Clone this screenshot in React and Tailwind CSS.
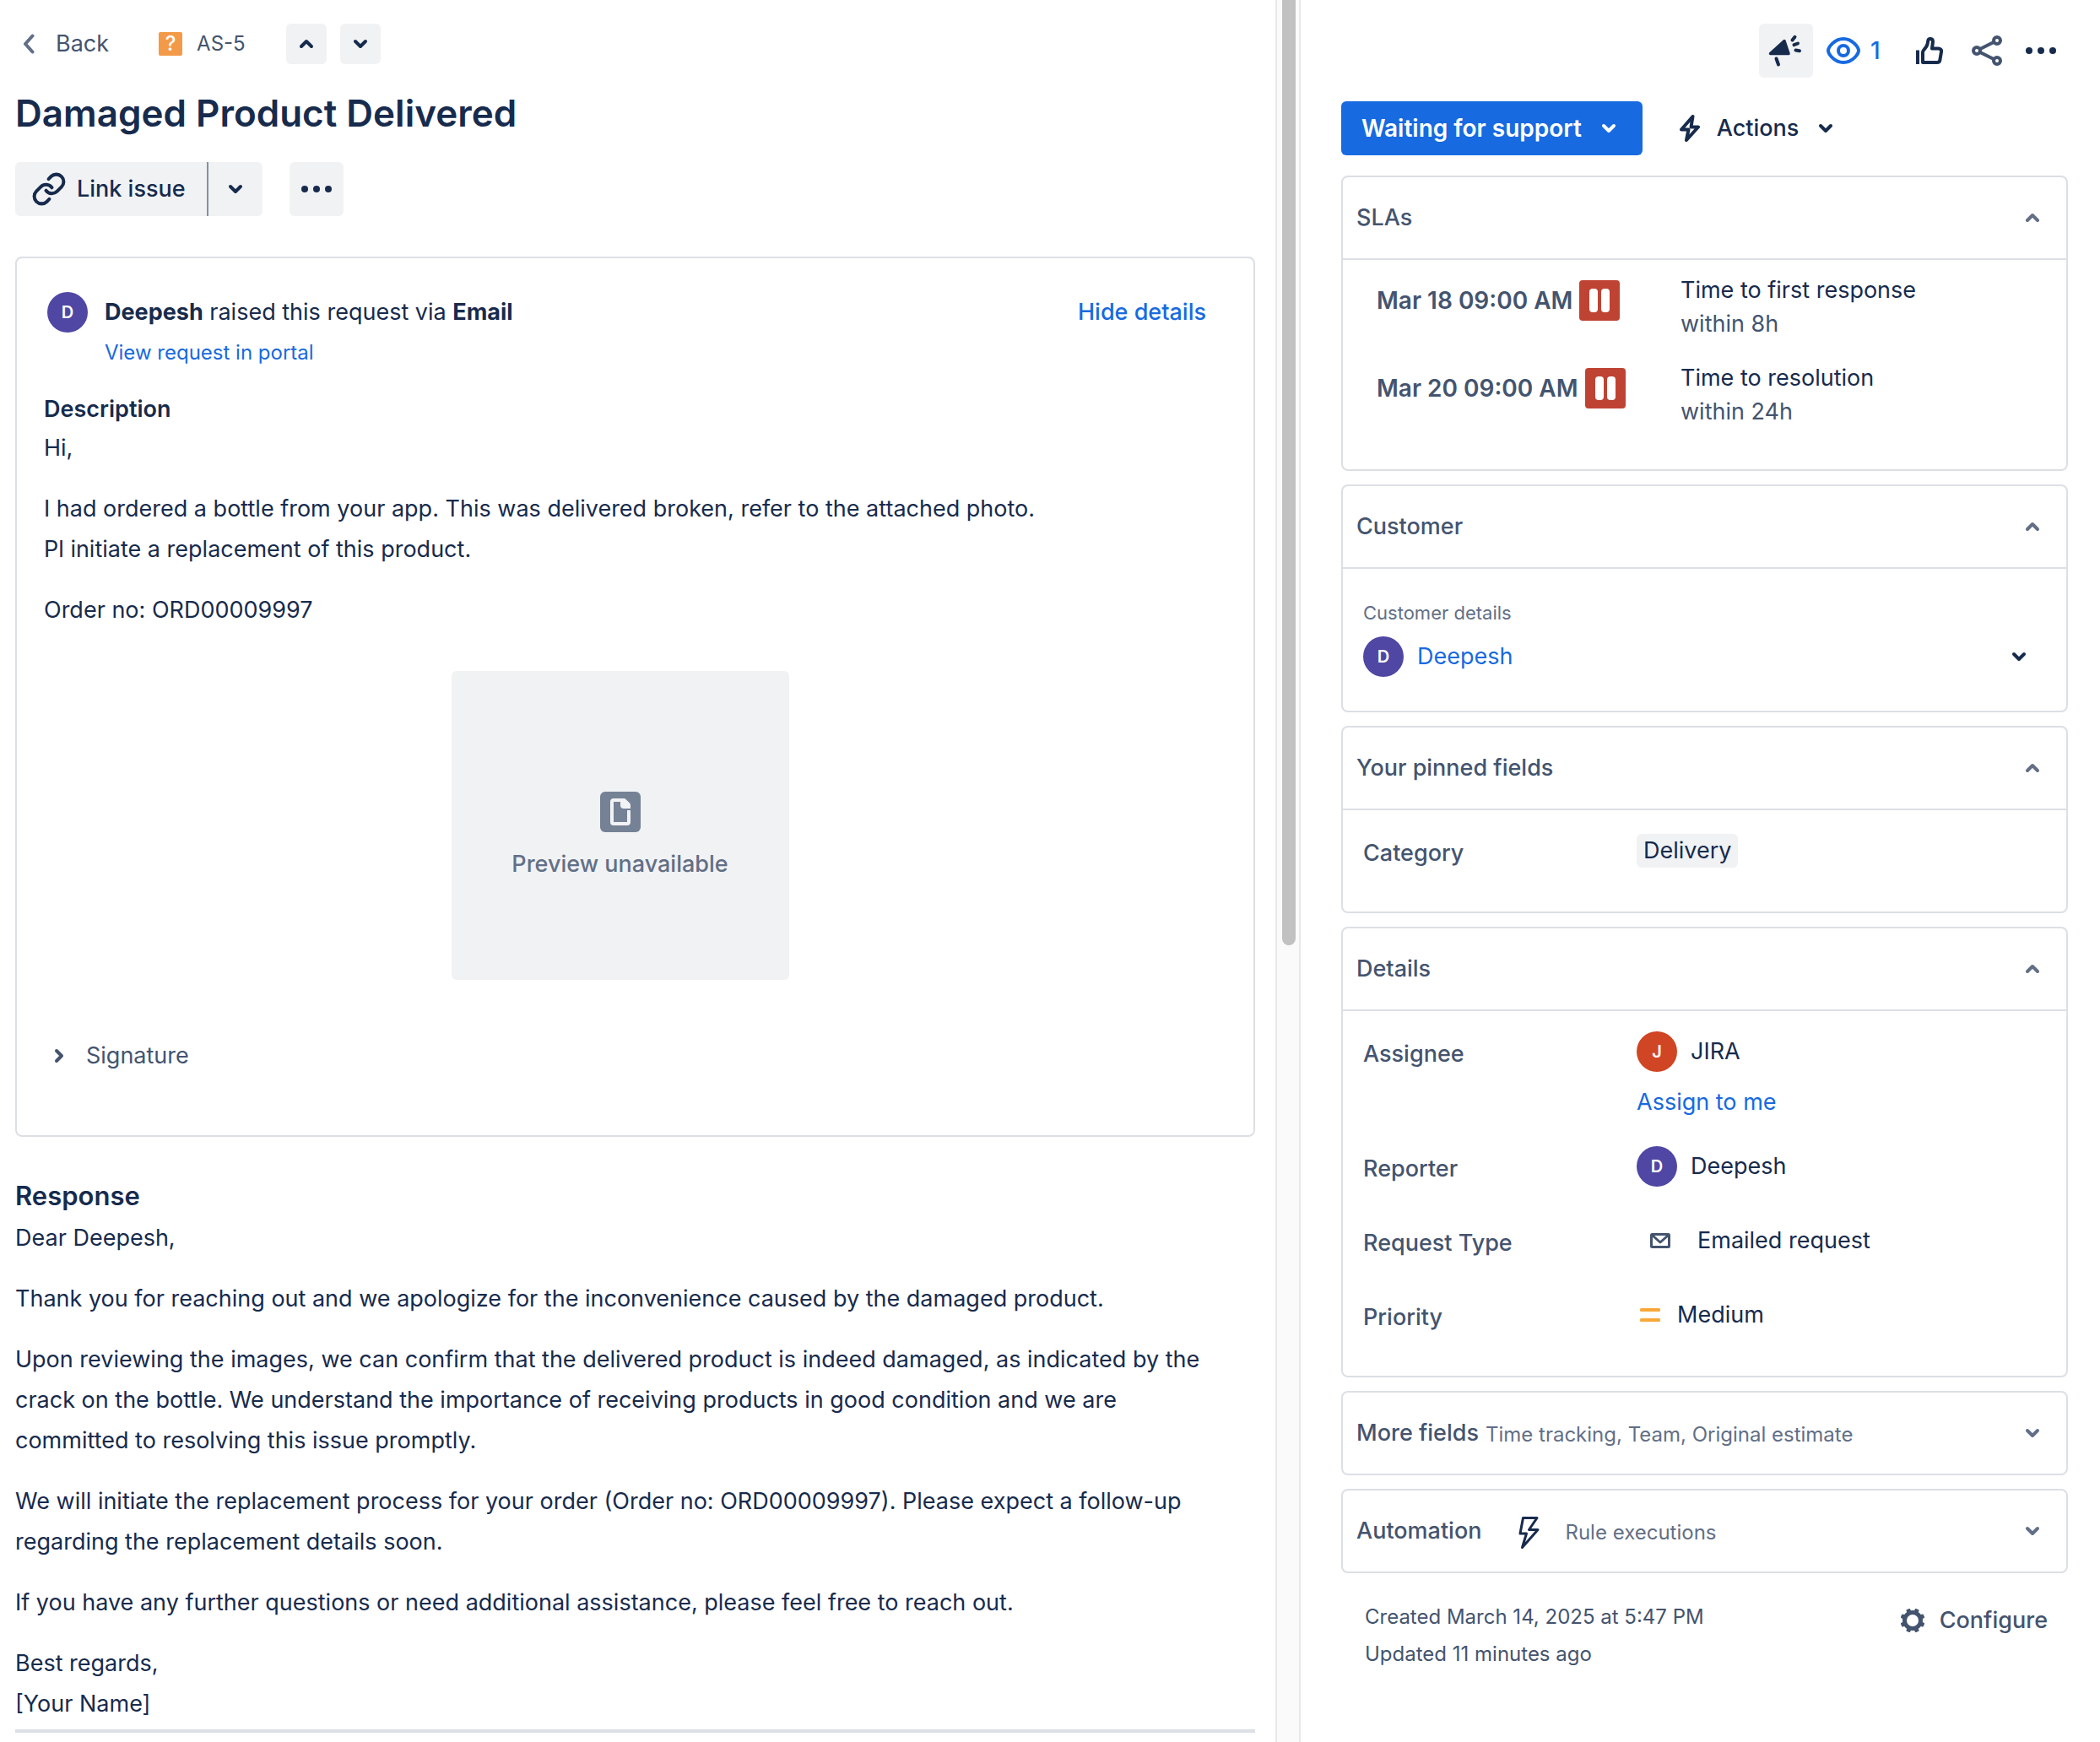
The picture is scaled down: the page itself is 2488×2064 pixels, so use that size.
import React from "react";
import { Link as LinkIcon } from "lucide-react";

const CHEVRONS = {
  down: "M6 9l6 6 6-6",
  up: "M6 15l6-6 6 6",
  right: "M9 6l6 6-6 6",
};

function Chevron({ dir = "down", className = "" }) {
  return (
    <svg viewBox="0 0 24 24" className={`size-6 shrink-0 ${className}`} fill="none" stroke="currentColor" strokeWidth="4" strokeLinecap="round" strokeLinejoin="round" aria-hidden="true">
      <path d={CHEVRONS[dir]} />
    </svg>
  );
}

function BackIcon() {
  return (
    <svg viewBox="0 0 16 24" className="h-6 w-4 text-[#626F86]" fill="none" stroke="currentColor" strokeWidth="4" strokeLinecap="round" strokeLinejoin="round" aria-hidden="true">
      <path d="M12.5 2.5 4 12l8.5 9.5" />
    </svg>
  );
}

function Dots() {
  return (
    <svg viewBox="0 0 36 8" className="h-2 w-9" fill="currentColor" aria-hidden="true">
      <circle cx="4" cy="4" r="4" />
      <circle cx="18" cy="4" r="4" />
      <circle cx="32" cy="4" r="4" />
    </svg>
  );
}

function Megaphone() {
  return (
    <svg viewBox="0 0 64 64" className="size-16" fill="none" stroke="currentColor" strokeWidth="4" strokeLinecap="round" strokeLinejoin="round" aria-hidden="true">
      <path d="M13.5 35.5 30 20.5l5 15Z" fill="currentColor" strokeWidth="3.5" />
      <path d="M20.500 41.500 23 48.500M39.500 19.500l3-3.700M41.500 25.200l4.500-1.700M43.500 31.500l4.500.7" />
    </svg>
  );
}

function Eye() {
  return (
    <svg viewBox="0 0 48 48" className="size-12" fill="none" stroke="currentColor" strokeWidth="4" aria-hidden="true">
      <path d="M6 24c0-3.500 7-14 18-14s18 10.500 18 14-7 14-18 14S6 27.500 6 24Z" />
      <circle cx="24" cy="24" r="6" />
    </svg>
  );
}

function ThumbUp() {
  return (
    <svg viewBox="0 0 32 34" className="h-[34px] w-8" fill="none" stroke="currentColor" strokeWidth="4" strokeLinejoin="round" aria-hidden="true">
      <path d="M2 16.500V33" />
      <path d="M8 31V18.500c0-2.500 4.500-4.500 5.500-9l.7-4C14.800 2 20 2 20 6.500L19 14.500h7.500c2.500 0 4 1.500 3.500 3.800l-1.700 10c-.3 1.700-1.500 2.700-3.300 2.700Z" />
    </svg>
  );
}

function Share() {
  return (
    <svg viewBox="0 0 48 48" className="size-12 text-[#44546F]" fill="none" stroke="currentColor" strokeWidth="4" aria-hidden="true">
      <circle cx="12" cy="24" r="4" />
      <circle cx="36" cy="12" r="4" />
      <circle cx="36" cy="36" r="4" />
      <path d="m15.500 22.200 17-8.500M15.500 25.800l17 8.500" />
    </svg>
  );
}

function ActionBolt() {
  return (
    <svg viewBox="0 0 24 32" className="h-8 w-6" fill="none" stroke="currentColor" strokeWidth="4" strokeLinecap="round" strokeLinejoin="round" aria-hidden="true">
      <path d="M15.500 2 2 17.500h8.500L8 30l14-15.500h-8.500Z" />
    </svg>
  );
}

function RuleBolt() {
  return (
    <svg viewBox="0 0 25 40" className="h-10 w-[25px] text-[#172B4D]" fill="none" stroke="currentColor" strokeWidth="3" strokeLinejoin="round" aria-hidden="true">
      <path d="M5.500 2.500H22L12.500 16.500H23L4.500 37.500 9.500 21H2Z" />
    </svg>
  );
}

function Gear() {
  return (
    <svg viewBox="0 0 28 28" className="size-7" fill="currentColor" aria-hidden="true">
      <circle cx="14" cy="14" r="9.500" fill="none" stroke="currentColor" strokeWidth="5" />
      {[22.5, 67.5, 112.5, 157.5, 202.5, 247.5, 292.5, 337.5].map((a) => (
        <rect key={a} x="11.500" y="-0.500" width="5" height="5" rx="1" transform={`rotate(${a} 14 14)`} />
      ))}
    </svg>
  );
}

function Mail() {
  return (
    <svg viewBox="0 0 24 18" className="h-[18px] w-6 text-[#44546F]" fill="none" stroke="currentColor" strokeWidth="3" strokeLinejoin="round" aria-hidden="true">
      <rect x="1.500" y="1.500" width="21" height="15" rx="1" />
      <path d="m3 3 9 8 9-8" />
    </svg>
  );
}

function MediumPriority() {
  return (
    <svg viewBox="0 0 24 16" className="h-4 w-6" fill="#F9A737" aria-hidden="true">
      <rect width="24" height="4" rx="1.500" />
      <rect y="12" width="24" height="4" rx="1.500" />
    </svg>
  );
}

function FileIcon() {
  return (
    <svg viewBox="0 0 48 48" className="size-12" aria-hidden="true">
      <rect width="48" height="48" rx="6" fill="#758195" />
      <path d="M34 22v14a2 2 0 0 1-2 2H16a2 2 0 0 1-2-2V12a2 2 0 0 1 2-2h11" fill="none" stroke="#F1F2F4" strokeWidth="4" />
      <path d="M24 8h4c1 0 2 .5 2.700 1.200L35 13.500c.6.700 1 1.500 1 2.500v4h-8a4 4 0 0 1-4-4Z" fill="#F1F2F4" />
    </svg>
  );
}

function Avatar({ letter, className = "bg-[#4F47A3]" }) {
  return (
    <span className={`flex size-12 shrink-0 items-center justify-center rounded-full text-xl font-semibold text-white ${className}`}>
      {letter}
    </span>
  );
}

function PausedBadge() {
  return (
    <span role="img" aria-label="Paused" className="flex size-12 items-center justify-center gap-1 rounded bg-[#BF4333]">
      <span className="h-7 w-2.5 rounded-sm bg-white" />
      <span className="h-7 w-2.5 rounded-sm bg-white" />
    </span>
  );
}

function Panel({ title, extra, open = true, children }) {
  return (
    <section className="rounded-lg border-2 border-[#DCDFE4]">
      <h2>
        <button type="button" aria-expanded={open} className="flex h-24 w-full items-center pr-7 pl-4 text-left text-[#44546F]">
          <span className="font-medium">{title}</span>
          {extra}
          <Chevron dir={open ? "up" : "down"} className="ml-auto text-[#626F86]" />
        </button>
      </h2>
      {open && <div className="border-t-2 border-[#DCDFE4]">{children}</div>}
    </section>
  );
}

function Field({ label, children }) {
  return (
    <div className="grid grid-cols-[324fr_509fr]">
      <dt className="leading-[54px] font-medium text-[#44546F]">{label}</dt>
      <dd>{children}</dd>
    </div>
  );
}

function Sla({ due, name, limit }) {
  return (
    <li className="grid grid-cols-[360fr_457fr]">
      <div className="mt-2 flex h-12 items-center gap-2 text-[28px] font-semibold text-[#44546F]">
        {due}
        <PausedBadge />
      </div>
      <div className="leading-10">
        <p>{name}</p>
        <p className="text-[#44546F]">{limit}</p>
      </div>
    </li>
  );
}

export default function App() {
  return (
    <div className="grid min-h-screen grid-cols-[minmax(0,1511fr)_30px_minmax(0,947fr)] bg-white font-[Inter,sans-serif] text-[27px] text-[#172B4D]">
      <main className="pt-7 pr-6 pl-[18px]">
        <nav className="flex h-12 items-center text-[#44546F]">
          <a href="#queue" className="ml-2 flex items-center gap-6">
            <BackIcon />
            Back
          </a>
          <a href="#issue" className="ml-[59px] flex items-center gap-[17px] text-2xl">
            <span aria-hidden="true" className="flex size-7 items-center justify-center rounded-xs bg-[#F39A49] text-2xl leading-7 font-medium text-white">?</span>
            AS-5
          </a>
          <div className="ml-12 flex gap-4 text-[#172B4D]">
            <button type="button" aria-label="Previous issue" className="flex size-12 items-center justify-center rounded-md bg-[#F1F2F4]">
              <Chevron dir="up" />
            </button>
            <button type="button" aria-label="Next issue" className="flex size-12 items-center justify-center rounded-md bg-[#F1F2F4]">
              <Chevron />
            </button>
          </div>
        </nav>

        <h1 className="mt-[30px] text-[44px] leading-[56px] font-semibold">Damaged Product Delivered</h1>

        <div className="mt-[30px] flex h-16 gap-8">
          <div className="flex overflow-hidden rounded-md bg-[#F1F2F4]">
            <button type="button" className="flex items-center gap-3 border-r-2 border-[#8590A2] pr-[25px] pl-[19px] font-medium">
              <LinkIcon className="size-[42px]" strokeWidth={2.3} aria-hidden="true" />
              Link issue
            </button>
            <button type="button" aria-label="More link options" className="flex w-16 items-center justify-center">
              <Chevron />
            </button>
          </div>
          <button type="button" aria-label="More actions" className="flex w-16 items-center justify-center rounded-md bg-[#F1F2F4]">
            <Dots />
          </button>
        </div>

        <section className="mt-12 rounded-lg border-2 border-[#DCDFE4] pt-10 pr-14 pb-[70px] pl-8 leading-12">
          <header className="flex pl-1">
            <Avatar letter="D" />
            <div className="ml-5">
              <p>
                <strong className="font-bold">Deepesh</strong> raised this request via <strong className="font-bold">Email</strong>
              </p>
              <a href="#portal" className="block text-2xl leading-12 text-[#176AE0]">View request in portal</a>
            </div>
            <button type="button" className="ml-auto self-start font-medium text-[#176AE0]">Hide details</button>
          </header>
          <h2 className="mt-[21px] leading-11 font-semibold">Description</h2>
          <p>Hi,</p>
          <p className="mt-6">
            I had ordered a bottle from your app. This was delivered broken, refer to the attached photo.
            <br />
            Pl initiate a replacement of this product.
          </p>
          <p className="mt-6">Order no: ORD00009997</p>
          <div className="mt-12 mr-1 flex justify-center pr-2">
            <div className="flex h-[366px] w-[400px] flex-col items-center rounded-md bg-[#F1F2F4] pt-[143px]">
              <FileIcon />
              <p className="mt-3.5 font-medium text-[#626F86]">Preview unavailable</p>
            </div>
          </div>
          <button type="button" aria-expanded="false" className="mt-[66px] flex items-center gap-5 pl-1.5 text-[#44546F]">
            <Chevron dir="right" />
            Signature
          </button>
        </section>

        <section className="pr-10 leading-12">
          <h2 className="mt-11 text-[31px] leading-[52px] font-semibold">Response</h2>
          <div className="flex flex-col gap-6">
            <p>Dear Deepesh,</p>
            <p>Thank you for reaching out and we apologize for the inconvenience caused by the damaged product.</p>
            <p>Upon reviewing the images, we can confirm that the delivered product is indeed damaged, as indicated by the crack on the bottle. We understand the importance of receiving products in good condition and we are committed to resolving this issue promptly.</p>
            <p>We will initiate the replacement process for your order (Order no: ORD00009997). Please expect a follow-up regarding the replacement details soon.</p>
            <p>If you have any further questions or need additional assistance, please feel free to reach out.</p>
            <p>
              Best regards,
              <br />
              [Your Name]
            </p>
          </div>
        </section>
        <hr className="mt-1.5 h-1 border-0 bg-[#DCDFE4]" />
      </main>

      <div aria-hidden="true" className="border-x-2 border-[#E8E8E8] bg-[#FAFAFA] pl-1.5">
        <div className="h-280 w-4 rounded-b-full bg-[#C1C1C1]" />
      </div>

      <aside className="pt-7 pr-[38px] pl-12">
        <div className="flex h-16 items-center justify-end">
          <button type="button" aria-label="Give feedback" className="rounded-md bg-[#F1F2F4]">
            <Megaphone />
          </button>
          <button type="button" aria-label="Watching, 1 watcher" className="ml-1 flex h-16 w-[98px] items-center gap-2 pl-2 text-[28px] font-medium text-[#176AE0]">
            <Eye />1
          </button>
          <button type="button" aria-label="Vote" className="ml-1 flex size-16 items-center justify-center">
            <ThumbUp />
          </button>
          <button type="button" aria-label="Share" className="ml-1 flex size-16 items-center justify-center">
            <Share />
          </button>
          <button type="button" aria-label="More" className="flex size-16 items-center justify-center">
            <Dots />
          </button>
        </div>

        <div className="mt-7 flex h-16">
          <button type="button" className="flex items-center gap-5 rounded-md bg-[#176AE0] pr-7 pl-6 text-[28px] font-semibold text-white">
            Waiting for support
            <Chevron />
          </button>
          <button type="button" className="ml-11 flex items-center gap-5 font-medium">
            <ActionBolt />
            Actions
            <Chevron />
          </button>
        </div>

        <div className="mt-6 flex flex-col gap-4">
          <Panel title="SLAs">
            <ul className="flex flex-col gap-6 pt-4 pb-12 pl-10">
              <Sla due="Mar 18 09:00 AM" name="Time to first response" limit="within 8h" />
              <Sla due="Mar 20 09:00 AM" name="Time to resolution" limit="within 24h" />
            </ul>
          </Panel>

          <Panel title="Customer">
            <div className="pt-9 pr-11 pb-10 pl-6">
              <p className="text-[22px] leading-8 text-[#626F86]">Customer details</p>
              <div className="mt-3 flex items-center">
                <Avatar letter="D" />
                <a href="#customer" className="ml-4 text-[#176AE0]">Deepesh</a>
                <button type="button" aria-label="Show customer details" className="ml-auto">
                  <Chevron />
                </button>
              </div>
            </div>
          </Panel>

          <Panel title="Your pinned fields">
            <dl className="pt-6 pb-[42px] pl-6">
              <Field label="Category">
                <span className="mt-1 inline-block rounded-md bg-[#F1F2F4] px-2 leading-10">Delivery</span>
              </Field>
            </dl>
          </Panel>

          <Panel title="Details">
            <dl className="flex flex-col gap-[34px] pt-6 pb-[42px] pl-6">
              <Field label="Assignee">
                <div className="flex h-12 items-center gap-4">
                  <Avatar letter="J" className="bg-[#D04523]" />
                  JIRA
                </div>
                <button type="button" className="mt-[18px] block leading-9 text-[#176AE0]">Assign to me</button>
              </Field>
              <Field label="Reporter">
                <div className="flex h-12 items-center gap-4">
                  <Avatar letter="D" />
                  Deepesh
                </div>
              </Field>
              <Field label="Request Type">
                <div className="flex h-12 items-center gap-8 pl-4">
                  <Mail />
                  Emailed request
                </div>
              </Field>
              <Field label="Priority">
                <div className="flex h-12 items-center gap-5 pl-1">
                  <MediumPriority />
                  Medium
                </div>
              </Field>
            </dl>
          </Panel>

          <Panel
            title="More fields"
            open={false}
            extra={<span className="ml-2 pt-1 text-2xl text-[#626F86]">Time tracking, Team, Original estimate</span>}
          />

          <Panel
            title="Automation"
            open={false}
            extra={
              <span className="ml-11 flex items-center gap-[30px] pt-1 text-2xl text-[#626F86]">
                <RuleBolt />
                Rule executions
              </span>
            }
          />
        </div>

        <footer className="mt-[30px] flex items-start justify-between pr-6 pl-7 text-[#44546F]">
          <div className="text-2xl leading-11">
            <p>Created March 14, 2025 at 5:47 PM</p>
            <p>Updated 11 minutes ago</p>
          </div>
          <button type="button" className="flex h-[52px] items-center gap-[18px] font-medium">
            <Gear />
            Configure
          </button>
        </footer>
      </aside>
    </div>
  );
}
